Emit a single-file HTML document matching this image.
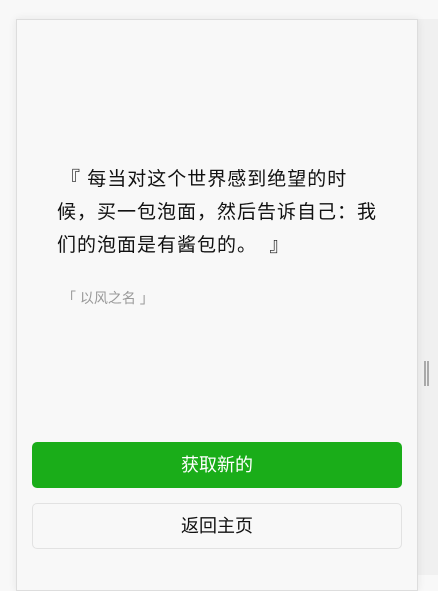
<!DOCTYPE html>
<html><head><meta charset="utf-8"><style>
html,body{margin:0;padding:0;width:438px;height:575px;overflow:hidden;background:#f8f8f8;font-family:"Liberation Sans","Noto Sans CJK SC",sans-serif;}
.strip{position:absolute;left:418px;top:19px;width:20px;height:556px;background:#f0f0f0;}
.sb{position:absolute;left:424px;top:361px;height:25px;border-left:2px solid #aaa;border-right:2px solid #aaa;width:1px;}
.card{position:absolute;left:16px;top:19px;width:400px;height:570px;background:#f8f8f8;border:1px solid #ddd;box-shadow:0 0 8px rgba(0,0,0,0.08);}
.q{position:absolute;left:40px;top:143px;font-size:19px;line-height:33px;color:#111;letter-spacing:1px;white-space:nowrap;}
.a{position:absolute;left:45px;top:268px;font-size:14px;color:#999;}
.b1{position:absolute;left:15px;top:422px;width:370px;height:46px;background:#1aad19;border-radius:5px;color:#fff;font-size:18px;text-align:center;line-height:46px;}
.b2{position:absolute;left:15px;top:483px;width:368px;height:44px;border:1px solid #e2e2e2;border-radius:5px;color:#111;font-size:18px;text-align:center;line-height:44px;}
</style></head><body>
<div class="strip"></div><div class="sb"></div>
<div class="card">
<div class="q"><span style="margin-left:4px">『</span>&nbsp;每当对这个世界感到绝望的时<br>候，买一包泡面，然后告诉自己：我<br>们的泡面是有酱包的。&nbsp;&nbsp;』</div>
<div class="a">「 以风之名 」</div>
<div class="b1">获取新的</div>
<div class="b2">返回主页</div>
</div>
</body></html>
